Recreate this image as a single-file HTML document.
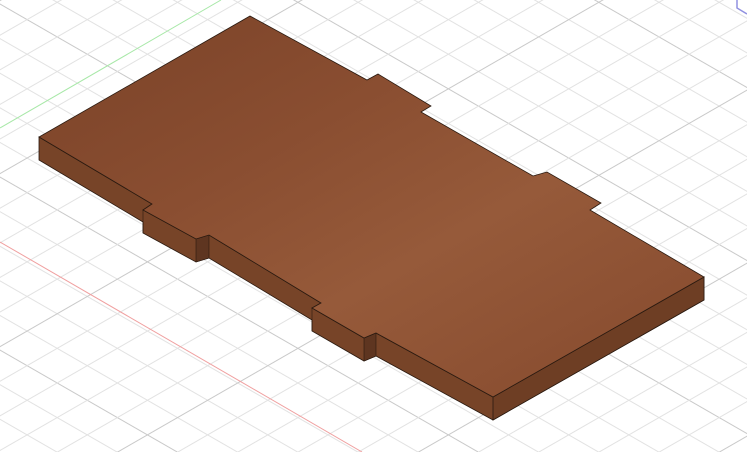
<!DOCTYPE html>
<html><head><style>html,body{margin:0;padding:0;background:#fff;overflow:hidden}svg{display:block}</style></head>
<body>
<svg width="747" height="452" viewBox="0 0 747 452" xmlns="http://www.w3.org/2000/svg">
<defs>
<pattern id="g1" width="60" height="150" patternUnits="userSpaceOnUse" patternTransform="rotate(29.9) translate(0,3)">
<line x1="0" y1="0.5" x2="60" y2="0.5" stroke="#c9c9c9" stroke-width="1"/>
<line x1="0" y1="30.5" x2="60" y2="30.5" stroke="#e2e2e2" stroke-width="1"/>
<line x1="0" y1="60.5" x2="60" y2="60.5" stroke="#e2e2e2" stroke-width="1"/>
<line x1="0" y1="90.5" x2="60" y2="90.5" stroke="#e2e2e2" stroke-width="1"/>
<line x1="0" y1="120.5" x2="60" y2="120.5" stroke="#e2e2e2" stroke-width="1"/>
</pattern>
<pattern id="g2" width="60" height="150" patternUnits="userSpaceOnUse" patternTransform="rotate(-29.9)">
<line x1="0" y1="0.5" x2="60" y2="0.5" stroke="#c9c9c9" stroke-width="1"/>
<line x1="0" y1="30.5" x2="60" y2="30.5" stroke="#e2e2e2" stroke-width="1"/>
<line x1="0" y1="60.5" x2="60" y2="60.5" stroke="#e2e2e2" stroke-width="1"/>
<line x1="0" y1="90.5" x2="60" y2="90.5" stroke="#e2e2e2" stroke-width="1"/>
<line x1="0" y1="120.5" x2="60" y2="120.5" stroke="#e2e2e2" stroke-width="1"/>
</pattern>
<linearGradient id="top" x1="0" y1="0" x2="1" y2="1">
<stop offset="0" stop-color="#7a4228"/>
<stop offset="0.35" stop-color="#8a4e31"/>
<stop offset="0.6" stop-color="#965a3a"/>
<stop offset="1" stop-color="#85492d"/>
</linearGradient>
</defs>
<rect width="747" height="452" fill="#fff"/>
<rect width="747" height="452" fill="url(#g1)"/>
<rect width="747" height="452" fill="url(#g2)"/>
<line x1="0" y1="242" x2="362" y2="452" stroke="#f0a0a0" stroke-width="1"/>
<line x1="0" y1="128" x2="221" y2="0" stroke="#a8e8a8" stroke-width="1"/>
<path d="M737,0 L737,8 L747,14" fill="none" stroke="#9090e0" stroke-width="1.5"/>
<polygon points="39,137 152,204 143,210 196,239 209,235 321,303 312,308 364,338 376,333 493,397 704,277 704,300 493,420 376,356 364,361 312,331 312,320 209,258 196,262 143,233 143,222 39,160" fill="#774428" stroke="#2a1a10" stroke-width="0.8"/>
<polygon points="493,397 704,277 704,300 493,420" fill="#6e3e24" stroke="#2a1a10" stroke-width="0.8"/>
<polygon points="196,239 209,235 209,258 196,262" fill="#5e3520" stroke="#2a1a10" stroke-width="0.6"/>
<polygon points="364,338 376,333 376,356 364,361" fill="#5e3520" stroke="#2a1a10" stroke-width="0.6"/>
<line x1="143" y1="210" x2="143" y2="233" stroke="#2a1a10" stroke-width="0.6"/>
<line x1="312" y1="308" x2="312" y2="331" stroke="#2a1a10" stroke-width="0.6"/>
<polygon points="250,16 367,80 378,74 431,106 421,112 533,176 547,172 601,203 590,210 704,277 493,397 376,333 364,338 312,308 321,303 209,235 196,239 143,210 152,204 39,137" fill="url(#top)" stroke="#2a1a10" stroke-width="0.8"/>
</svg>
</body></html>
